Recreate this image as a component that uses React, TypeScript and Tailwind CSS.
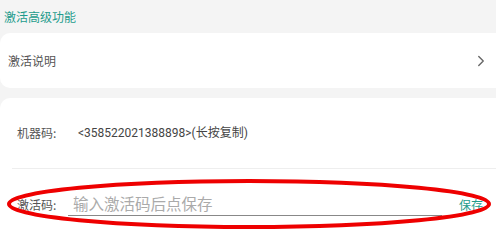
import { ChevronRight } from 'lucide-react';

export default function App() {
  return (
    <div
      className="relative h-[237px] w-[496px] overflow-hidden bg-[#f4f4f4]"
      style={{ fontFamily: '"Noto Sans CJK SC", "Noto Sans", sans-serif' }}
    >
      {/* Section title */}
      <div className="flex h-[33px] items-center pl-[4px] text-[12px] text-[#1f9c8c]">
        激活高级功能
      </div>

      {/* Activation help */}
      <div className="flex h-[55px] items-center justify-between rounded-l-[10px] bg-white pl-[8px] pr-[6px]">
        <span className="text-[12px] text-[#555]">激活说明</span>
        <ChevronRight className="h-[18px] w-[18px] text-[#666]" strokeWidth={1.8} />
      </div>

      {/* Machine code + activation */}
      <div className="mt-[10px] rounded-tl-[10px] bg-white">
        <div className="flex h-[70px] items-center text-[12px]">
          <span className="w-[78px] pl-[17px] text-[#555]">机器码:</span>
          <span className="text-[#444]" style={{ fontFamily: '"Roboto", "Noto Sans CJK SC", sans-serif' }}>
            &lt;358522021388898&gt;(长按复制)
          </span>
        </div>
        <div className="ml-[12px] h-px bg-[#eeeeee]" />
        <div className="flex h-[70px] items-start pt-[24px]">
          <span className="w-[68px] pl-[17px] pt-[3px] text-[12px] text-[#555]">激活码:</span>
          <div className="w-[374px] border-b border-[#888] pb-[1px] pl-[5px] text-[15.5px] leading-[21px] text-[#aaa]">
            输入激活码后点保存
          </div>
          <span className="ml-[17px] pt-[3px] text-[12px] text-[#1f9c8c]">保存</span>
        </div>
      </div>

      {/* red annotation */}
      <svg className="pointer-events-none absolute left-0 top-0" width="496" height="237">
        <ellipse cx="249" cy="204" rx="240" ry="23" fill="none" stroke="#ee0000" strokeWidth="4" />
      </svg>
    </div>
  );
}
